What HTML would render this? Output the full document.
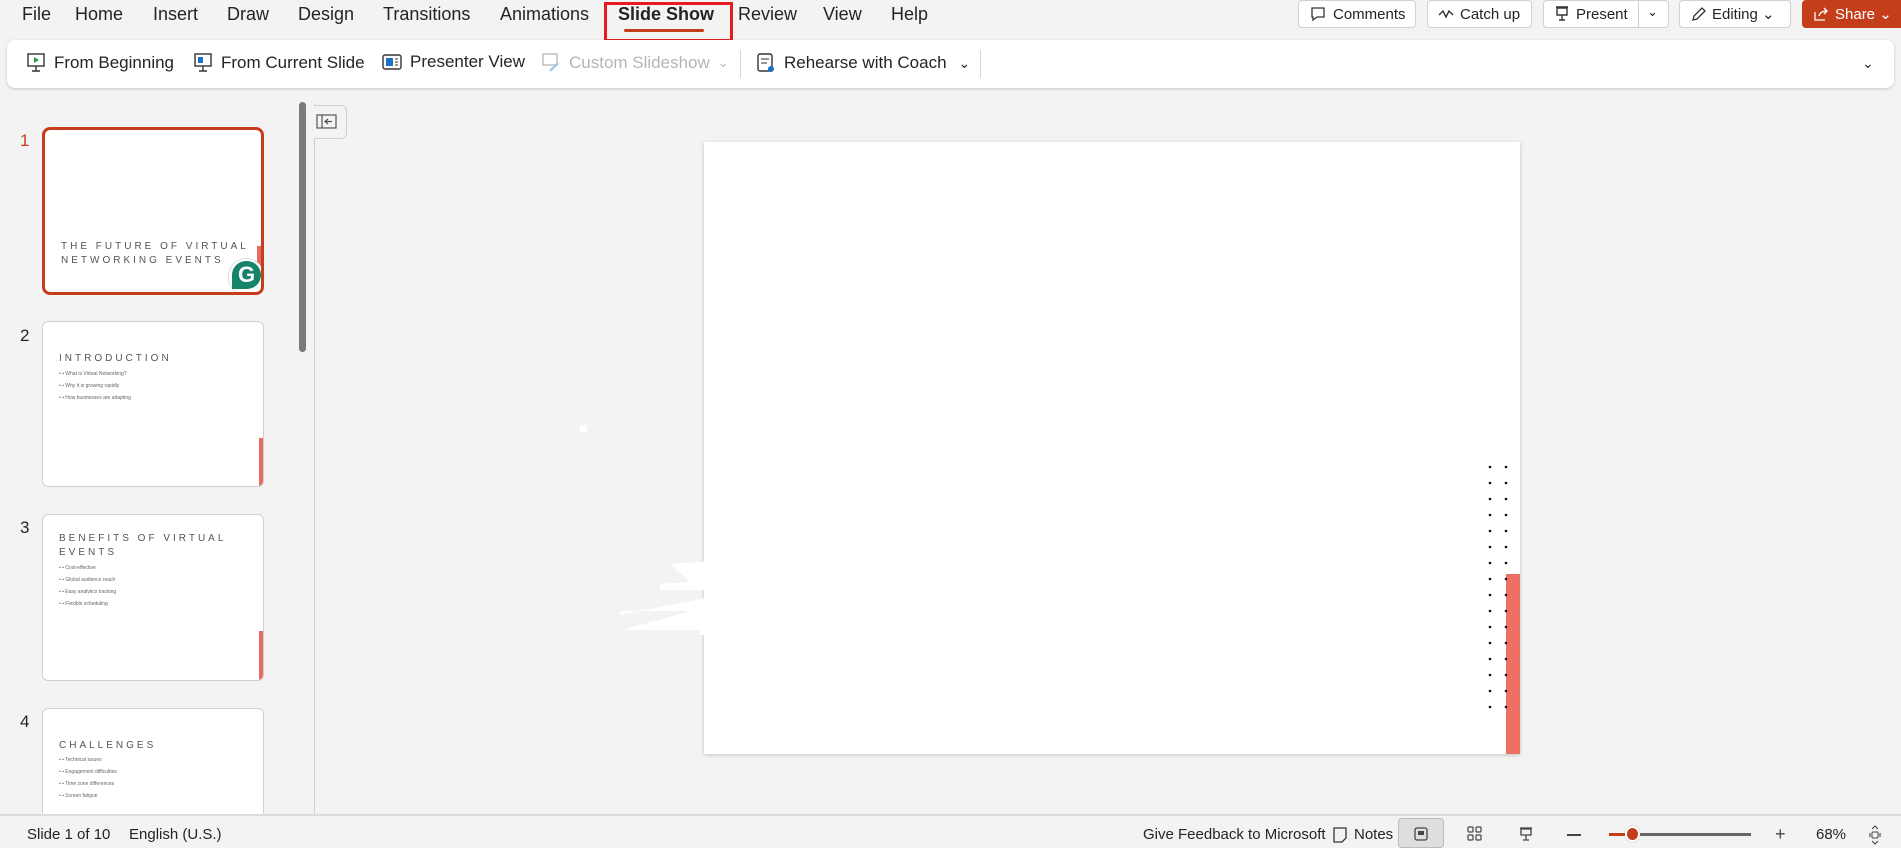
<!DOCTYPE html>
<html><head><style>
*{box-sizing:border-box;margin:0;padding:0}
body{width:1901px;height:845px;background:#f3f3f3;font-family:"Liberation Sans",sans-serif;color:#242424;position:relative;overflow:hidden}
.a{position:absolute;white-space:nowrap}
.tab{position:absolute;top:4px;font-size:18px;color:#242424}
.btn{position:absolute;top:0;height:28px;background:#fff;border:1px solid #d1d1d1;border-radius:4px;font-size:15px;display:flex;align-items:center;padding-left:10px;gap:6px}
.rb{position:absolute;top:52px;font-size:17px;display:flex;align-items:center;gap:8px}
.th{position:absolute;left:42px;width:222px;background:#fff;border:1px solid #d0d0d0;border-radius:6px;overflow:hidden}
.th .t{position:absolute;left:16px;font-size:10px;letter-spacing:3px;color:#555}
.th .b{position:absolute;left:16px;font-size:5px;color:#666;line-height:12px}
.th .r{position:absolute;right:0;width:4px;background:#e86b5f}
.num{position:absolute;left:20px;font-size:17px}
</style></head><body>
<div class="tab" style="left:22px">File</div>
<div class="tab" style="left:75px">Home</div>
<div class="tab" style="left:153px">Insert</div>
<div class="tab" style="left:227px">Draw</div>
<div class="tab" style="left:298px">Design</div>
<div class="tab" style="left:383px">Transitions</div>
<div class="tab" style="left:500px">Animations</div>
<div class="tab" style="left:618px;font-weight:bold">Slide Show</div>
<div class="a" style="left:624px;top:29px;width:80px;height:3px;background:#c43e1c;border-radius:2px"></div>
<div class="a" style="left:604px;top:2px;width:129px;height:40px;border:3px solid #e41b23"></div>
<div class="tab" style="left:738px">Review</div>
<div class="tab" style="left:823px">View</div>
<div class="tab" style="left:891px">Help</div>

<div class="btn" style="left:1298px;width:118px"><svg width="18" height="18"><path d="M3 3h12v9H8l-4 3v-3H3z" fill="none" stroke="#333" stroke-width="1.3"/></svg>Comments</div>
<div class="btn" style="left:1427px;width:105px"><svg width="16" height="14"><path d="M1 8l4-4 3 6 3-6 4 4" fill="none" stroke="#333" stroke-width="1.4"/></svg>Catch up</div>
<div class="btn" style="left:1543px;width:126px"><svg width="16" height="18"><path d="M2 2h12M3 3h10v7H3zM8 10v5M5 15h6" fill="none" stroke="#333" stroke-width="1.4"/></svg>Present<span style="position:absolute;left:94px;top:0;height:26px;border-left:1px solid #d1d1d1"></span><span style="position:absolute;left:103px;top:3px;font-size:13px">&#8964;</span></div>
<div class="btn" style="left:1679px;width:112px"><svg width="16" height="18"><path d="M3 15l1-4 8-8 3 3-8 8z" fill="none" stroke="#333" stroke-width="1.3"/></svg>Editing &#8964;</div>
<div class="btn" style="left:1802px;width:104px;background:#c43e1c;border-color:#c43e1c;color:#fff"><svg width="16" height="16"><path d="M2 6v8h10M6 10c1-4 4-5 8-5M11 2l3 3-3 3" fill="none" stroke="#fff" stroke-width="1.3"/></svg>Share &#8964;</div>

<div class="a" style="left:7px;top:40px;width:1887px;height:48px;background:#fff;border-radius:8px;box-shadow:0 1px 3px rgba(0,0,0,.18)"></div>
<div class="rb" style="left:26px"><svg width="20" height="22"><rect x="2" y="2" width="16" height="12" fill="none" stroke="#333" stroke-width="1.4"/><path d="M8 5l5 3-5 3z" fill="#2c9b45"/><path d="M10 14v5M6 19h8" stroke="#333" stroke-width="1.4"/></svg>From Beginning</div>
<div class="rb" style="left:193px"><svg width="20" height="22"><rect x="2" y="2" width="16" height="12" fill="none" stroke="#333" stroke-width="1.4"/><rect x="5" y="5" width="5" height="6" fill="#1a6fc6"/><path d="M10 14v5M6 19h8" stroke="#333" stroke-width="1.4"/></svg>From Current Slide</div>
<div class="rb" style="left:382px"><svg width="20" height="20"><rect x="1" y="3" width="18" height="14" rx="2" fill="none" stroke="#333" stroke-width="1.4"/><rect x="4" y="6" width="7" height="8" fill="#1a6fc6"/><path d="M13 7h3M13 10h3M13 13h3" stroke="#333"/></svg>Presenter View</div>
<div class="rb" style="left:541px;color:#b5b5b5"><svg width="20" height="22"><rect x="2" y="2" width="14" height="11" fill="none" stroke="#bbb" stroke-width="1.4"/><path d="M9 19l8-8" stroke="#9cc3e6" stroke-width="2"/></svg>Custom Slideshow <span style="font-size:13px">&#8964;</span></div>
<div class="a" style="left:740px;top:50px;height:28px;border-left:1px solid #d6d6d6"></div>
<div class="rb" style="left:756px"><svg width="20" height="22"><rect x="2" y="2" width="14" height="17" rx="2" fill="none" stroke="#333" stroke-width="1.4"/><path d="M5 7h8M5 11h6" stroke="#333"/><circle cx="15" cy="17" r="3" fill="#1a6fc6"/></svg>Rehearse with Coach <span style="font-size:14px;margin-left:4px">&#8964;</span></div>
<div class="a" style="left:980px;top:50px;height:28px;border-left:1px solid #d6d6d6"></div>
<div class="a" style="left:1862px;top:55px;font-size:14px">&#8964;</div>

<div class="a" style="left:299px;top:102px;width:7px;height:250px;background:#7a7a7a;border-radius:4px"></div>
<div class="a" style="left:314px;top:104px;width:1px;height:712px;background:#d0d0d0"></div>
<div class="a" style="left:314px;top:105px;width:33px;height:34px;border:1px solid #d0d0d0;border-left:none;border-radius:0 6px 6px 0;background:#f3f3f3"></div>
<svg class="a" style="left:316px;top:113px" width="22" height="18"><rect x="1" y="2" width="19" height="13" fill="none" stroke="#555" stroke-width="1.2"/><path d="M6 2v13M16 8.5h-7M12 6l-3 2.5 3 2.5" fill="none" stroke="#555" stroke-width="1.2"/></svg>

<div class="num" style="top:131px;color:#c43e1c">1</div>
<div class="th" style="top:127px;height:168px;border:3px solid #c43e1c;border-radius:8px">
<div class="t" style="top:110px;line-height:14px">THE FUTURE OF VIRTUAL<br>NETWORKING EVENTS</div>
<div class="r" style="top:116px;bottom:0"></div>
<div class="a" style="left:183px;top:128px;width:36px;height:38px;background:#fff;border-radius:18px 18px 0 18px;border:1px solid #ddd"></div>
<div class="a" style="left:187px;top:131px;width:29px;height:28px;background:#15846b;border-radius:14px 14px 14px 0;color:#fff;font-weight:bold;font-size:22px;text-align:center;line-height:28px">G</div>
</div>
<div class="num" style="top:326px">2</div>
<div class="th" style="top:321px;height:166px">
<div class="t" style="top:31px">INTRODUCTION</div>
<div class="b" style="top:46px">• ▪ What is Virtual Networking?<br>• ▪ Why it is growing rapidly<br>• ▪ How businesses are adapting</div>
<div class="r" style="top:116px;bottom:0"></div></div>
<div class="num" style="top:518px">3</div>
<div class="th" style="top:514px;height:167px">
<div class="t" style="top:17px;line-height:14px">BENEFITS OF VIRTUAL<br>EVENTS</div>
<div class="b" style="top:47px">• ▪ Cost-effective<br>• ▪ Global audience reach<br>• ▪ Easy analytics tracking<br>• ▪ Flexible scheduling</div>
<div class="r" style="top:116px;bottom:0"></div></div>
<div class="num" style="top:712px">4</div>
<div class="th" style="top:708px;height:120px">
<div class="t" style="top:31px">CHALLENGES</div>
<div class="b" style="top:45px">• ▪ Technical issues<br>• ▪ Engagement difficulties<br>• ▪ Time zone differences<br>• ▪ Screen fatigue</div></div>

<div class="a" style="left:704px;top:142px;width:816px;height:612px;background:#fff;box-shadow:0 1px 4px rgba(0,0,0,.2)"></div>
<div class="a" style="left:1506px;top:574px;width:14px;height:180px;background:#ec7063"></div>
<svg class="a" style="left:1486px;top:464px" width="26" height="250">
<g fill="#111">
<circle cx="4" cy="3" r="1.3"/><circle cx="20" cy="3" r="1.3"/><circle cx="4" cy="19" r="1.3"/><circle cx="20" cy="19" r="1.3"/><circle cx="4" cy="35" r="1.3"/><circle cx="20" cy="35" r="1.3"/><circle cx="4" cy="51" r="1.3"/><circle cx="20" cy="51" r="1.3"/><circle cx="4" cy="67" r="1.3"/><circle cx="20" cy="67" r="1.3"/><circle cx="4" cy="83" r="1.3"/><circle cx="20" cy="83" r="1.3"/><circle cx="4" cy="99" r="1.3"/><circle cx="20" cy="99" r="1.3"/><circle cx="4" cy="115" r="1.3"/><circle cx="20" cy="115" r="1.3"/><circle cx="4" cy="131" r="1.3"/><circle cx="20" cy="131" r="1.3"/><circle cx="4" cy="147" r="1.3"/><circle cx="20" cy="147" r="1.3"/><circle cx="4" cy="163" r="1.3"/><circle cx="20" cy="163" r="1.3"/><circle cx="4" cy="179" r="1.3"/><circle cx="20" cy="179" r="1.3"/><circle cx="4" cy="195" r="1.3"/><circle cx="20" cy="195" r="1.3"/><circle cx="4" cy="211" r="1.3"/><circle cx="20" cy="211" r="1.3"/><circle cx="4" cy="227" r="1.3"/><circle cx="20" cy="227" r="1.3"/><circle cx="4" cy="243" r="1.3"/><circle cx="20" cy="243" r="1.3"/>
</g></svg>
<div class="a" style="left:580px;top:425px;width:7px;height:7px;background:#fff"></div>
<svg class="a" style="left:620px;top:555px" width="90" height="80"><path d="M50 9l55-4v30H40v-6l30-2zM2 75l80-22h20v22zM80 70h20v10H80z" fill="#fff"/><path d="M0 60L100 40v16H0z" fill="#fff"/></svg>

<div class="a" style="left:0;top:814px;width:1901px;height:31px;background:#f3f3f3;border-top:2px solid #dcdcdc"></div>
<div class="a" style="left:27px;top:826px;font-size:15px">Slide 1 of 10</div>
<div class="a" style="left:129px;top:826px;font-size:15px">English (U.S.)</div>
<div class="a" style="left:1143px;top:826px;font-size:15px">Give Feedback to Microsoft</div>
<svg class="a" style="left:1332px;top:826px" width="16" height="18"><path d="M2 2h12v10l-4 4H2z" fill="none" stroke="#333" stroke-width="1.3"/></svg>
<div class="a" style="left:1354px;top:826px;font-size:15px">Notes</div>
<div class="a" style="left:1398px;top:818px;width:46px;height:30px;background:#dedede;border:1px solid #bbb;border-radius:4px"></div>
<svg class="a" style="left:1414px;top:827px" width="14" height="14"><rect x="1" y="1" width="12" height="12" rx="2" fill="none" stroke="#444" stroke-width="1.3"/><rect x="4" y="4" width="6" height="4" fill="#444"/></svg>
<svg class="a" style="left:1467px;top:826px" width="16" height="16"><g fill="none" stroke="#444" stroke-width="1.2"><rect x="1" y="1" width="5" height="5" rx="1"/><rect x="9" y="1" width="5" height="5" rx="1"/><rect x="1" y="9" width="5" height="5" rx="1"/><rect x="9" y="9" width="5" height="5" rx="1"/></g></svg>
<svg class="a" style="left:1518px;top:826px" width="16" height="18"><path d="M2 2h12M3 3h10v6H3zM8 9v5M5 14h6" fill="none" stroke="#444" stroke-width="1.3"/></svg>
<div class="a" style="left:1567px;top:834px;width:14px;height:1.5px;background:#444"></div>
<div class="a" style="left:1609px;top:833px;width:22px;height:3px;background:#c43e1c"></div>
<div class="a" style="left:1631px;top:833px;width:120px;height:3px;background:#666"></div>
<div class="a" style="left:1625px;top:826px;width:15px;height:16px;border-radius:50%;background:#c43e1c;border:2px solid #fff;box-shadow:0 0 1px #888"></div>
<div class="a" style="left:1775px;top:824px;font-size:18px;color:#444">+</div>
<div class="a" style="left:1816px;top:826px;font-size:15px">68%</div>
<svg class="a" style="left:1867px;top:825px" width="16" height="20"><path d="M5 4l3-3 3 3M5 16l3 3 3-3M3 8v4M13 8v4" fill="none" stroke="#444" stroke-width="1.1"/><rect x="5" y="7" width="6" height="6" rx="1" fill="none" stroke="#444"/></svg>
</body></html>
